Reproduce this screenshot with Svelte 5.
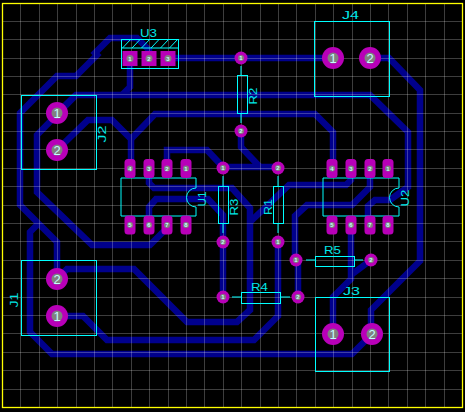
<script>
  const gridX = [];
  const gridY = [];
  for (let k = 0; k < 24; k++) gridX.push(Math.round(20.3 + 18.4 * k) + 0.5);
  for (let k = 0; k < 22; k++) gridY.push(Math.round(20.7 + 18.4 * k) + 0.5);

  const tracks = [
    "149,58 149,50 137,38 110,38 95,53 97,55 76,76 57,76 20,113 20,205 57,242 57,279",
    "57,113 76,95 370,95 408,132 408,187 390,200 375,200 368,206 368,225",
    "130,58 130,87 122,95",
    "76,95 37,135 37,192 92,245 150,245 167,228",
    "57,150 88,120 112,120 131,139 131,168",
    "131,139 155,114 315,114 333,132 333,168",
    "38,224 30,232 30,332 52,354 352,354 372,334",
    "57,279 67,269 134,269 187,322 237,322 250,310 250,208 232,188 154,188 149,183 149,168",
    "149,225 149,207 156,199 208,199 223,215 223,297",
    "57,316 83,316 107,340 254,340 278,316 278,242",
    "168,58 333,58",
    "370,58 389,58 420,90 420,261 371,310 371,334",
    "241,131 241,147 260,167",
    "223,167 278,167",
    "351,168 351,180 346,185 289,185 250,222",
    "298,297 298,260 295,260 295,216 307,205 352,205 370,187 370,168",
    "351,225 351,279 333,297 333,334",
    "351,275 371,260",
    "167,168 167,150 207,150 223,167"
  ];

  const boxes = [
    { x: 21, y: 95, w: 75, h: 74 },
    { x: 21, y: 260, w: 75, h: 75 },
    { x: 314, y: 21, w: 75, h: 75 },
    { x: 315, y: 297, w: 74, h: 74 },
    { x: 121, y: 39, w: 57, h: 29 },
    { x: 237, y: 75, w: 10, h: 38 },
    { x: 218, y: 186, w: 10, h: 37 },
    { x: 273, y: 186, w: 10, h: 37 },
    { x: 315, y: 256, w: 39, h: 10 },
    { x: 241, y: 292, w: 39, h: 11 }
  ];

  const wires = [
    "M121 48H178",
    "M122.5 48L131 39M132 48L140.5 39M141.5 48L150 39M151 48L159.5 39M160.500 48L169 39M169.500 48L178 39",
    "M241 66V75M241 113V123",
    "M223 176V186M223 223V233",
    "M278 176V186M278 223V233",
    "M306 260H315M354 260H363",
    "M232 297H241M280 297H290",
    "M196 188V178H121V216H196V207A9.5 9.500 0 0 1 196 188",
    "M399 188V178H323V216H399V207A9.5 9.500 0 0 1 399 188"
  ];

  const labels = [
    { t: "U3", x: 148.5, y: 33, w: 17 },
    { t: "J4", x: 350.5, y: 15, w: 17 },
    { t: "J3", x: 351.5, y: 291, w: 17 },
    { t: "R5", x: 332.5, y: 250, w: 17 },
    { t: "R4", x: 259.5, y: 287, w: 17 },
    { t: "J2", x: 102, y: 134, w: 17, rot: true },
    { t: "J1", x: 14, y: 300, w: 15, rot: true },
    { t: "R2", x: 253, y: 96, w: 17, rot: true },
    { t: "R3", x: 234, y: 207, w: 17, rot: true },
    { t: "R1", x: 268, y: 207, w: 16, rot: true },
    { t: "U1", x: 202, y: 199, w: 15, rot: true },
    { t: "U2", x: 405, y: 198, w: 17, rot: true }
  ];

  const bigPads = [
    { x: 57, y: 113, n: 1 }, { x: 57, y: 150, n: 2 },
    { x: 57, y: 316, n: 1 }, { x: 57, y: 279, n: 2 },
    { x: 333, y: 58, n: 1 }, { x: 370, y: 58, n: 2 },
    { x: 333, y: 334, n: 1 }, { x: 372, y: 334, n: 2 }
  ];

  const vias = [
    { x: 241, y: 58, n: 1 }, { x: 241, y: 131, n: 2 },
    { x: 223, y: 168, n: 1 }, { x: 223, y: 242, n: 2 },
    { x: 278, y: 168, n: 2 }, { x: 278, y: 242, n: 1 },
    { x: 296, y: 260, n: 1 }, { x: 371, y: 260, n: 2 },
    { x: 223, y: 297, n: 1 }, { x: 298, y: 297, n: 2 }
  ];

  const headerPads = [
    { x: 130, n: 1 }, { x: 149, n: 2 }, { x: 168, n: 3 }
  ];

  // dip pins, top row counts down from 4, bottom row up from 5
  const dipPads = [];
  for (const xs of [[130, 149, 167, 186], [332, 351, 370, 388]]) {
    xs.forEach((x, i) => {
      dipPads.push({ x, y: 168.5, n: 4 - i });
      dipPads.push({ x, y: 225, n: 5 + i });
    });
  }
</script>

<style>
  :global(body) {
    margin: 0;
    background: #000;
  }

  .board {
    display: block;
    width: 465px;
    height: 412px;
    background: #000;
  }

  .track {
    fill: none;
    stroke: #00008c;
    stroke-width: 6.5;
  }

  .grid {
    stroke: rgba(255, 255, 255, 0.24);
    stroke-width: 1;
  }

  .edge {
    fill: none;
    stroke: #ffff00;
    stroke-width: 1.3;
  }

  .outline {
    fill: none;
    stroke: #00ffff;
    stroke-width: 1;
  }

  .label {
    fill: #00e8e8;
    font-family: "Liberation Sans", sans-serif;
    font-size: 10.5px;
    text-anchor: middle;
  }

  .pad {
    fill: #b800b8;
  }

  .hole {
    fill: #808080;
  }

  .num {
    fill: #c4ffff;
    font-family: "Liberation Sans", sans-serif;
    font-weight: bold;
    text-anchor: middle;
  }

  .num-big {
    font-size: 13px;
    font-weight: normal;
  }

  .num-small {
    font-size: 6px;
  }
</style>

<svg class="board" viewBox="0 0 465 412">
  {#each tracks as points}
    <polyline class="track" {points} />
  {/each}

  {#each gridX as x}
    <line class="grid" x1={x} y1="4" x2={x} y2="407" />
  {/each}
  {#each gridY as y}
    <line class="grid" x1="3" y1={y} x2="462" y2={y} />
  {/each}

  <rect class="edge" x="2.500" y="3.500" width="460" height="404" />

  {#each boxes as b}
    <rect class="outline" x={b.x + 0.5} y={b.y + 0.5} width={b.w} height={b.h} />
  {/each}
  {#each wires as d}
    <path class="outline" {d} />
  {/each}

  {#each labels as l}
    <text
      class="label"
      x={l.x}
      y={l.y + 3.8}
      textLength={l.w}
      lengthAdjust="spacingAndGlyphs"
      transform={l.rot ? `rotate(-90 ${l.x} ${l.y})` : undefined}>{l.t}</text>
  {/each}

  {#each bigPads as p}
    <circle class="pad" cx={p.x} cy={p.y} r="11" />
    <circle class="hole" cx={p.x} cy={p.y} r="5.500" />
    <text class="num num-big" x={p.x} y={p.y + 4.500}>{p.n}</text>
  {/each}

  {#each vias as p}
    <circle class="pad" cx={p.x} cy={p.y} r="6.500" />
    <circle class="hole" cx={p.x} cy={p.y} r="3" />
    <text class="num num-small" x={p.x} y={p.y + 2.200}>{p.n}</text>
  {/each}

  {#each headerPads as p}
    <rect class="pad" x={p.x - 7.500} y="51" width="15" height="15" />
    <circle class="hole" cx={p.x} cy="58.500" r="3.500" />
    <text class="num num-small" x={p.x} y="60.700">{p.n}</text>
  {/each}

  {#each dipPads as p}
    <rect class="pad" x={p.x - 5.500} y={p.y - 9.500} width="11" height="19" rx="3.500" />
    <circle class="hole" cx={p.x} cy={p.y} r="3" />
    <text class="num num-small" x={p.x} y={p.y + 2.200}>{p.n}</text>
  {/each}
</svg>
